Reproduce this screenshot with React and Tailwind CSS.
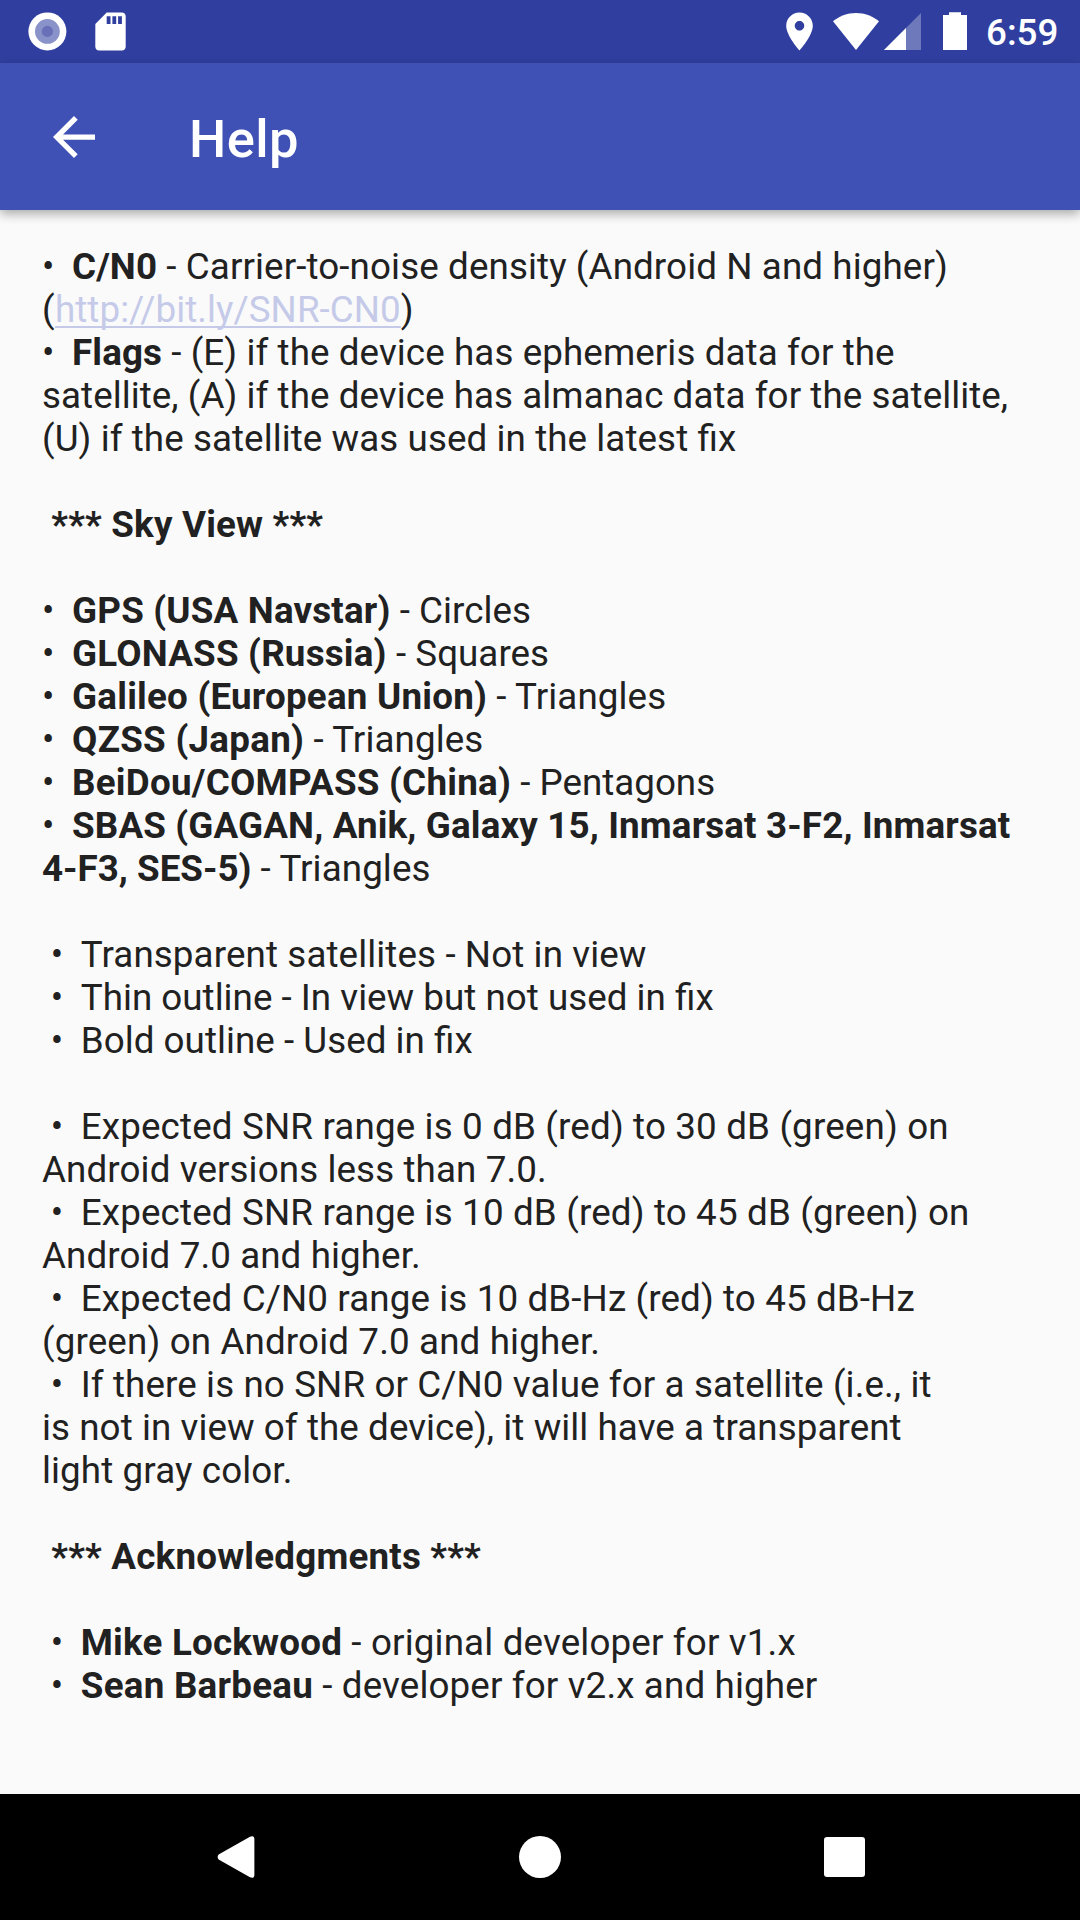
const BULLET = { t: '•  ', c: 'tracking-[-0.2px]' };
const INDENTED = { t: ' •  ', c: 'tracking-[-0.25px]' };

const lines = [
  [BULLET, { t: 'C/N0', b: 1, c: 'tracking-[0.08px]' }, { t: ' - Carrier-to-noise density (Android N and higher)', c: 'tracking-[0.11px]' }],
  [{ t: '(', c: 'tracking-[0.4px]' }, { t: 'http://bit.ly/SNR-CN0', a: 1, c: 'tracking-[0.06px]' }, { t: ')' }],
  [BULLET, { t: 'Flags', b: 1, c: 'tracking-[0.1px]' }, { t: ' - (E) if the device has ephemeris data for the', c: 'tracking-[0.095px]' }],
  [{ t: 'satellite, (A) if the device has almanac data for the satellite,', c: 'tracking-[0.065px]' }],
  [{ t: '(U) if the satellite was used in the latest fix', c: 'tracking-[0.08px]' }],
  [],
  [{ t: ' *** Sky View ***', b: 1, c: 'tracking-[0.19px]' }],
  [],
  [BULLET, { t: 'GPS (USA Navstar)', b: 1, c: 'tracking-[0.19px]' }, { t: ' - Circles', c: 'tracking-[0.05px]' }],
  [BULLET, { t: 'GLONASS (Russia)', b: 1, c: 'tracking-[0.2px]' }, { t: ' - Squares', c: 'tracking-[0.05px]' }],
  [BULLET, { t: 'Galileo (European Union)', b: 1, c: 'tracking-[0.22px]' }, { t: ' - Triangles', c: 'tracking-[0.1px]' }],
  [BULLET, { t: 'QZSS (Japan)', b: 1, c: 'tracking-[0.27px]' }, { t: ' - Triangles', c: 'tracking-[0.1px]' }],
  [BULLET, { t: 'BeiDou/COMPASS (China)', b: 1, c: 'tracking-[0.25px]' }, { t: ' - Pentagons' }],
  [BULLET, { t: 'SBAS (GAGAN, Anik, Galaxy 15, Inmarsat 3-F2, Inmarsat', b: 1, c: 'tracking-[0.15px]' }],
  [{ t: '4-F3, SES-5)', b: 1 }, { t: ' - Triangles', c: 'tracking-[0.1px]' }],
  [],
  [INDENTED, { t: 'Transparent satellites - Not in view', c: 'tracking-[0.11px]' }],
  [INDENTED, { t: 'Thin outline - In view but not used in fix', c: 'tracking-[0.02px]' }],
  [INDENTED, { t: 'Bold outline - Used in fix', c: 'tracking-[0.04px]' }],
  [],
  [INDENTED, { t: 'Expected SNR range is 0 dB (red) to 30 dB (green) on', c: 'tracking-[0.155px]' }],
  [{ t: 'Android versions less than 7.0.', c: 'tracking-[0.11px]' }],
  [INDENTED, { t: 'Expected SNR range is 10 dB (red) to 45 dB (green) on', c: 'tracking-[0.155px]' }],
  [{ t: 'Android 7.0 and higher.', c: 'tracking-[0.1px]' }],
  [INDENTED, { t: 'Expected C/N0 range is 10 dB-Hz (red) to 45 dB-Hz', c: 'tracking-[0.12px]' }],
  [{ t: '(green) on Android 7.0 and higher.', c: 'tracking-[0.14px]' }],
  [INDENTED, { t: 'If there is no SNR or C/N0 value for a satellite (i.e., it', c: 'tracking-[0.11px]' }],
  [{ t: 'is not in view of the device), it will have a transparent', c: 'tracking-[0.075px]' }],
  [{ t: 'light gray color.', c: 'tracking-[0.12px]' }],
  [],
  [{ t: ' *** Acknowledgments ***', b: 1, c: 'tracking-[0.2px]' }],
  [],
  [INDENTED, { t: 'Mike Lockwood', b: 1, c: 'tracking-[0.2px]' }, { t: ' - original developer for v1.x', c: 'tracking-[0.16px]' }],
  [INDENTED, { t: 'Sean Barbeau', b: 1, c: 'tracking-[0.25px]' }, { t: ' - developer for v2.x and higher', c: 'tracking-[0.14px]' }],
];

function Run({ run }) {
  const c = run.c || '';
  if (run.b) return <b className={`font-bold ${c}`}>{run.t}</b>;
  if (run.a)
    return (
      <a className={`text-[#c5cae9] underline decoration-[2px] underline-offset-[4px] [text-decoration-skip-ink:none] ${c}`}>
        {run.t}
      </a>
    );
  return <span className={c}>{run.t}</span>;
}

function StatusBar() {
  return (
    <div className="flex h-[63px] shrink-0 items-center bg-[#303f9f] pl-[28px] pr-[22px] text-white">
      <svg className="h-[63px] w-[39px]" viewBox="28 0 39 63">
        <circle cx="47.4" cy="31.4" r="19" fill="#fff" />
        <circle cx="47.4" cy="31.4" r="12.4" fill="#8a92ca" />
        <circle cx="47.4" cy="31.4" r="5.6" fill="#6870b8" />
      </svg>
      <svg className="ml-[28px] h-[63px] w-[31px]" viewBox="95 0 31 63" fill="#fff">
        <path
          transform="translate(87.7 8.7) scale(1.9)"
          d="M18 2h-8L4.02 8 4 20c0 1.1.9 2 2 2h12c1.1 0 2-.9 2-2V4c0-1.1-.9-2-2-2zm-6 6h-2V4h2v4zm3 0h-2V4h2v4zm3 0h-2V4h2v4z"
        />
      </svg>
      <div className="ml-auto flex items-center">
        <svg className="h-[63px] w-[28px]" viewBox="786 0 28 63" fill="#fff">
          <path
            transform="translate(776.7 8.7) scale(1.9)"
            d="M12 2C8.13 2 5 5.13 5 9c0 5.25 7 13 7 13s7-7.75 7-13c0-3.87-3.13-7-7-7zm0 9.5c-1.38 0-2.5-1.12-2.5-2.5s1.12-2.5 2.5-2.5 2.5 1.12 2.5 2.5-1.12 2.5-2.5 2.5z"
          />
        </svg>
        <svg className="ml-[18px] h-[63px] w-[90px]" viewBox="832 0 90 63" fill="#fff">
          <path d="M856 50 L833 21.3 C839 16.5 847 13 856 13 C865 13 873 16.5 879 21.3 Z" />
          <path d="M884 50 L921 13 V50 Z" fillOpacity=".3" />
          <path d="M884 50 L906 28 V50 Z" />
        </svg>
        <svg className="ml-[21px] h-[63px] w-[24px]" viewBox="943 0 24 63" fill="#fff">
          <path d="M943 15 H949 V12.3 H961 V15 H967 V50 H943 Z" />
        </svg>
        <span className="relative top-[1px] ml-[19px] w-[72px] text-[36.75px] leading-[43px] font-medium">6:59</span>
      </div>
    </div>
  );
}

export default function App() {
  return (
    <div className="flex h-[1920px] w-[1080px] flex-col overflow-hidden bg-[#fafafa] font-['Roboto',sans-serif]">
      <StatusBar />
      <header className="z-10 flex h-[147px] shrink-0 items-center bg-[#3f51b5] pl-[53px] shadow-[0_4px_10px_rgba(0,0,0,0.32)]">
        <svg className="h-[42px] w-[42px]" viewBox="4 4 16 16" fill="#fff">
          <path d="M20 11H7.83l5.59-5.59L12 4l-8 8 8 8 1.41-1.41L7.83 13H20v-2z" />
        </svg>
        <h1 className="ml-[94px] pt-[5px] text-[52.5px] leading-[62px] font-medium tracking-[0.4px] text-white">Help</h1>
      </header>
      <main className="flex-1 px-[42px] pt-[35px] text-[36.75px] leading-[43px] whitespace-pre text-[#212121] [font-feature-settings:'liga'_1]">
        {lines.map((line, i) => (
          <p key={i} className="h-[43px]">
            {line.map((run, j) => (
              <Run key={j} run={run} />
            ))}
          </p>
        ))}
      </main>
      <nav className="flex h-[126px] shrink-0 items-center justify-between bg-black pr-[215px] pl-[217px]">
        <svg className="h-[42px] w-[38px]" viewBox="0 0 38 42" fill="#fff">
          <path d="M1.6 18.6 L33 .7 Q37.4 -1 37.4 3.6 V38.4 Q37.4 43 33 41.3 L1.6 23.4 Q-.4 21 1.6 18.6 Z" />
        </svg>
        <span className="h-[42px] w-[42px] rounded-full bg-white" />
        <span className="h-[40px] w-[41px] rounded-[3px] bg-white" />
      </nav>
    </div>
  );
}
